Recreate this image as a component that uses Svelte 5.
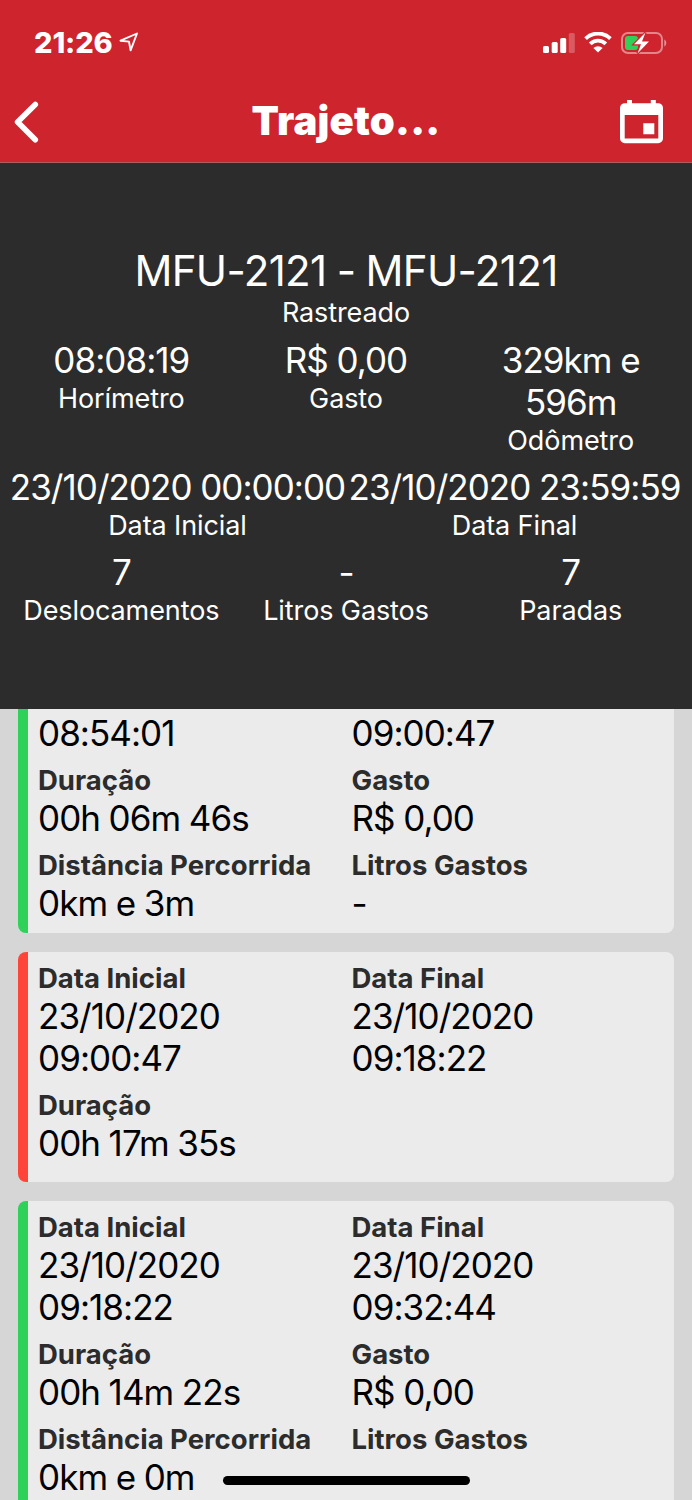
<script lang="ts">
	type Field = { label: string; value: string };

	const vehicle = { name: 'MFU-2121 - MFU-2121', status: 'Rastreado' };

	const summary: Field[][] = [
		[
			{ label: 'Horímetro', value: '08:08:19' },
			{ label: 'Gasto', value: 'R$ 0,00' },
			{ label: 'Odômetro', value: '329km e 596m' }
		],
		[
			{ label: 'Data Inicial', value: '23/10/2020 00:00:00' },
			{ label: 'Data Final', value: '23/10/2020 23:59:59' }
		],
		[
			{ label: 'Deslocamentos', value: '7' },
			{ label: 'Litros Gastos', value: '-' },
			{ label: 'Paradas', value: '7' }
		]
	];

	const moving = (start: string, end: string, duration: string, distance: string) => ({
		stopped: false,
		rows: [
			[
				{ label: 'Data Inicial', value: start },
				{ label: 'Data Final', value: end }
			],
			[
				{ label: 'Duração', value: duration },
				{ label: 'Gasto', value: 'R$ 0,00' }
			],
			[
				{ label: 'Distância Percorrida', value: distance },
				{ label: 'Litros Gastos', value: '-' }
			]
		] as Field[][]
	});

	// a stop has no cost or distance, its last row stays empty
	const stopped = (start: string, end: string, duration: string) => ({
		stopped: true,
		rows: [
			[
				{ label: 'Data Inicial', value: start },
				{ label: 'Data Final', value: end }
			],
			[{ label: 'Duração', value: duration }],
			[]
		] as Field[][]
	});

	const trips = [
		moving('23/10/2020 08:54:01', '23/10/2020 09:00:47', '00h 06m 46s', '0km e 3m'),
		stopped('23/10/2020 09:00:47', '23/10/2020 09:18:22', '00h 17m 35s'),
		moving('23/10/2020 09:18:22', '23/10/2020 09:32:44', '00h 14m 22s', '0km e 0m')
	];
</script>

<div class="screen">
	<header>
		<div class="status-bar">
			<div class="clock">
				<span>21:26</span>
				<svg width="20" height="20" viewBox="0 0 20 20">
					<path
						d="M18 1.5 1.5 8.7 10 9.6 11.6 18.3Z"
						fill="none"
						stroke="#fff"
						stroke-width="1.9"
						stroke-linejoin="round"
					/>
				</svg>
			</div>
			<div class="indicators">
				<svg width="32" height="22" viewBox="0 0 32 22" fill="#fff">
					<rect x="0" y="14" width="6" height="7" rx="1.5" />
					<rect x="8.7" y="10" width="6" height="11" rx="1.5" />
					<rect x="17.2" y="6" width="6" height="15" rx="1.5" />
					<rect x="25.8" y="1" width="6" height="20" rx="1.5" opacity="0.25" />
				</svg>
				<svg width="28" height="21" viewBox="0 0 28 21" fill="none" stroke="#fff">
					<path d="M1.6 6.6a17.6 17.6 0 0 1 24.8 0" stroke-width="3.8" />
					<path d="M6.2 11.8a11 11 0 0 1 15.6 0" stroke-width="3.8" />
					<path d="M14 20.6 9.4 16a6.6 6.6 0 0 1 9.2 0Z" fill="#fff" stroke="none" />
				</svg>
				<svg width="46" height="24" viewBox="0 0 46 24">
					<rect
						x="1"
						y="2"
						width="40"
						height="20"
						rx="6"
						fill="none"
						stroke="#fff"
						stroke-opacity="0.45"
						stroke-width="2"
					/>
					<path d="M43.3 8.5c2.6 1.2 2.6 5.8 0 7Z" fill="#fff" fill-opacity="0.5" />
					<rect x="4" y="5" width="13" height="14" rx="3" fill="#30d158" />
					<path
						d="M24.5 1.5 13 13.3h7L16.5 22.5 28 10.5h-7Z"
						fill="#fff"
						stroke="#cd242d"
						stroke-width="2.4"
						paint-order="stroke"
					/>
				</svg>
			</div>
		</div>

		<div class="nav-bar">
			<button class="back" aria-label="Voltar">
				<svg width="28" height="44" viewBox="0 0 28 44">
					<path
						d="M23.3 4.4 5.6 22l17.7 17.8"
						fill="none"
						stroke="#fff"
						stroke-width="5.6"
						stroke-linecap="round"
						stroke-linejoin="round"
					/>
				</svg>
			</button>
			<h1>Trajeto...</h1>
			<button class="calendar" aria-label="Data">
				<svg width="44" height="44" viewBox="0 0 44 44">
					<path
						fill="#fff"
						fill-rule="evenodd"
						d="M7 0h5v3.2h18.800V0h5v3.200H38.200A4.800 4.800 0 0 1 43 8v30.400a4.800 4.800 0 0 1-4.800 4.800H4.800A4.800 4.800 0 0 1 0 38.400V8a4.800 4.800 0 0 1 4.800-4.800H7ZM4.700 15v23.400h33.600V15ZM23.300 23.200h11v11h-11Z"
					/>
				</svg>
			</button>
		</div>
	</header>

	<section class="summary">
		<h2>{vehicle.name}</h2>
		<div class="label status">{vehicle.status}</div>
		{#each summary as row}
			<div class="row">
				{#each row as field}
					<div class="field">
						<div class="value" class:nowrap={row.length === 2}>{field.value}</div>
						<div class="label">{field.label}</div>
					</div>
				{/each}
			</div>
		{/each}
	</section>

	<main>
		{#each trips as trip}
			<article class:stopped={trip.stopped}>
				{#each trip.rows as row}
					<div class="row">
						{#each row as field}
							<div class="field">
								<div class="label">{field.label}</div>
								<div class="value">{field.value}</div>
							</div>
						{/each}
					</div>
				{/each}
			</article>
		{/each}
	</main>

	<div class="home-indicator"></div>
</div>

<style>
	:global(body) {
		margin: 0;
	}

	.screen {
		position: relative;
		display: flex;
		flex-direction: column;
		width: 692px;
		height: 1500px;
		overflow: hidden;
		background: #d6d6d6;
		font-family: Inter, 'Liberation Sans', sans-serif;
	}

	header {
		box-sizing: border-box;
		flex: none;
		height: 163px;
		background: #cd242d;
		border-bottom: 1px solid #a6605f;
		color: #fff;
	}

	.status-bar {
		display: flex;
		align-items: center;
		justify-content: space-between;
		height: 84px;
		padding: 0 25px 0 34px;
	}

	.clock {
		display: flex;
		align-items: center;
		gap: 6px;
		font-size: 29px;
		font-weight: 800;
		letter-spacing: -0.1px;
	}

	.indicators {
		display: flex;
		align-items: center;
		gap: 9px;
		padding-top: 1px;
	}

	.nav-bar {
		display: flex;
		align-items: center;
		justify-content: space-between;
		height: 76px;
		padding: 0 28px 0 12px;
	}

	h1 {
		margin: 0;
		padding-bottom: 2px;
		font-size: 40px;
		font-weight: 900;
		line-height: 48px;
		letter-spacing: 0.2px;
	}

	button {
		display: flex;
		width: 44px;
		padding: 0;
		border: none;
		background: none;
	}

	.back {
		width: 60px;
	}

	.summary {
		display: flex;
		flex: none;
		flex-direction: column;
		justify-content: center;
		box-sizing: border-box;
		height: 546px;
		padding: 0 9px;
		background: #2c2c2c;
		color: #fff;
		text-align: center;
	}

	h2 {
		margin: 0;
		font-size: 42px;
		font-weight: 400;
		line-height: 50px;
		letter-spacing: -0.65px;
		word-spacing: -1px;
	}

	.row {
		display: flex;
	}

	.summary .row {
		margin-top: 9px;
	}

	.field {
		flex: 1 1 0;
		min-width: 0;
	}

	.label {
		box-sizing: border-box;
		height: 34px;
		padding-top: 1px;
		font-size: 27px;
		line-height: 34px;
		letter-spacing: -0.1px;
	}

	.label.status {
		padding-top: 0;
	}

	.value {
		font-size: 35px;
		line-height: 42px;
		letter-spacing: -0.95px;
		word-spacing: -0.3px;
	}

	.nowrap {
		white-space: nowrap;
	}

	main {
		display: flex;
		flex: 1;
		flex-direction: column;
		gap: 19px;
		min-height: 0;
		padding: 0 18px;
		overflow: hidden;
	}

	article {
		display: flex;
		flex: none;
		flex-direction: column;
		gap: 9px;
		padding: 9px 9px 9px 10px;
		border-left: 10px solid #30d158;
		border-radius: 8px;
		background: #ebebeb;
		color: #000;
	}

	/* list is scrolled, the first card slides under the summary */
	article:first-child {
		margin-top: -82px;
	}

	article.stopped {
		border-left-color: #ff453a;
	}

	article .field {
		flex: 0 0 50%;
	}

	article .label {
		padding-top: 0;
		color: #2c2c2c;
		font-size: 27.5px;
		font-weight: 700;
		letter-spacing: 0;
	}

	article .value {
		max-width: 240px;
	}

	.home-indicator {
		position: absolute;
		bottom: 15px;
		left: 223px;
		width: 247px;
		height: 9px;
		border-radius: 5px;
		background: #000;
	}
</style>
